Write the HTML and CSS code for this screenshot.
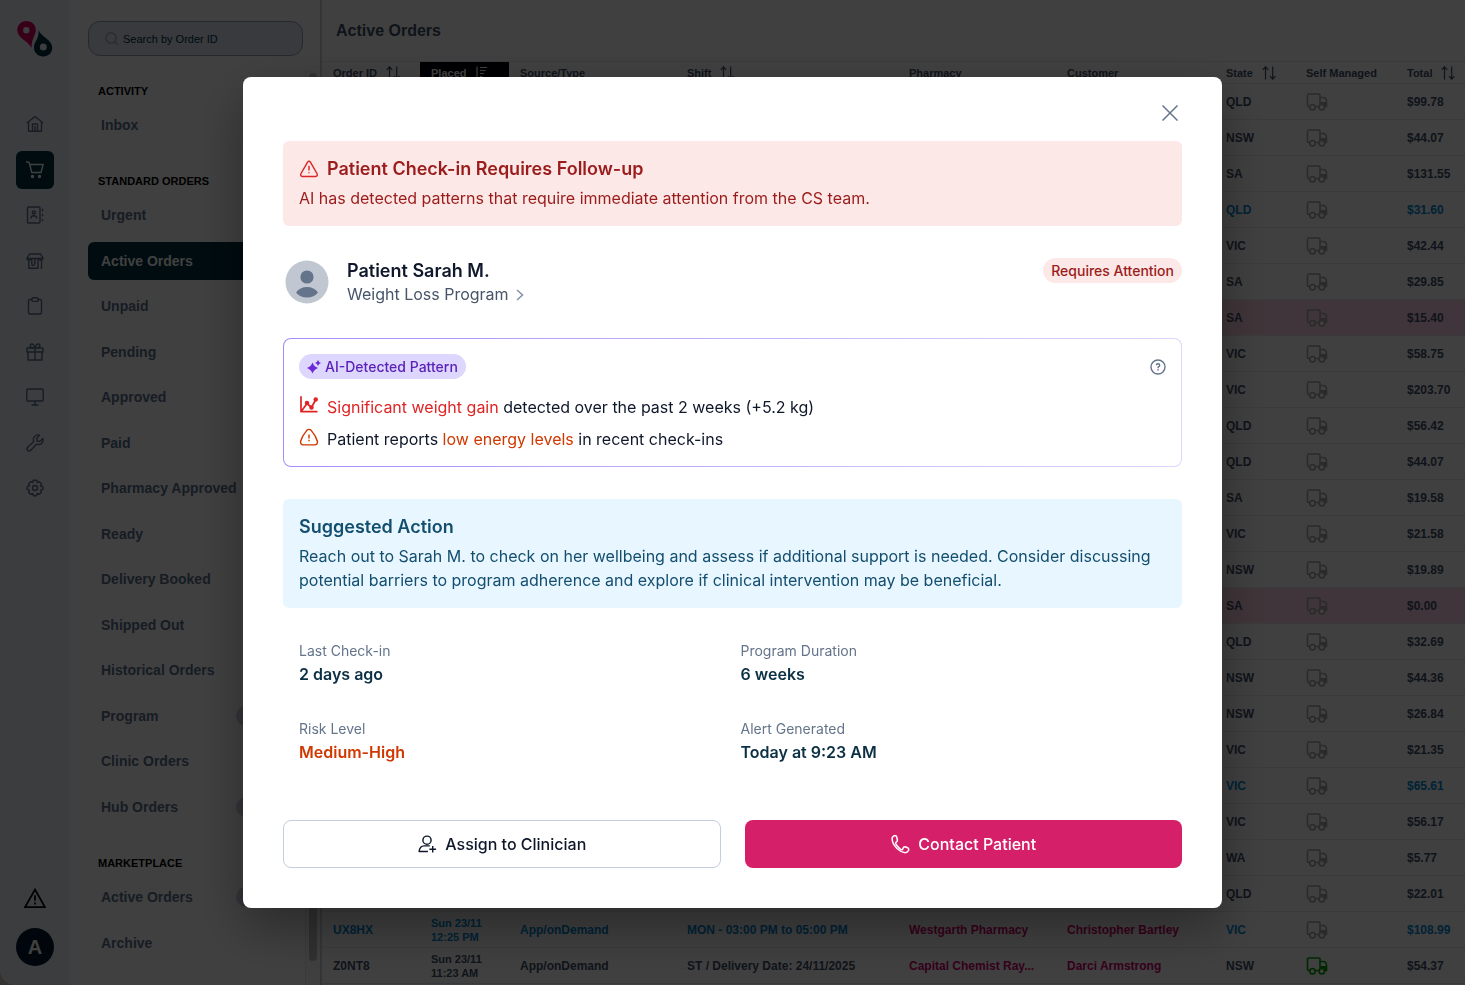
FILE: index.html
```html
<!DOCTYPE html>
<html lang="en">
<head>
<meta charset="utf-8">
<meta name="viewport" content="width=device-width, initial-scale=1">
<title>Active Orders</title>
<link rel="stylesheet" href="styles.css">
</head>
<body>
<svg class="sprite" aria-hidden="true">
  <symbol id="truck" viewBox="0 0 22 18"><path d="M14 13.500H9.500M3.500 13.500H2.500Q1.500 13.500 1.500 12.500V2Q1.500 1 2.500 1H13Q14 1 14 2V13.500M14 4.500H17Q20.500 4.500 20.500 8.500V13.500H19" fill="none" stroke="currentColor" stroke-width="1.600"/><path d="M14 9H21V14H19.500L17 12L14.500 14Z" fill="currentColor"/><circle cx="6.500" cy="14.200" r="2.700" fill="none" stroke="currentColor" stroke-width="1.600"/><circle cx="15.800" cy="14.200" r="2.700" class="truck-wheel" stroke="currentColor" stroke-width="1.600"/></symbol>
  <symbol id="sort" viewBox="0 0 14 14"><path d="M3.500 13.500V.8M.8 3.800L3.500 .8L6.200 3.800M10.700 .5V13.200M8 10.200L10.700 13.200L13.400 10.200" fill="none" stroke="currentColor" stroke-width="1.200"/></symbol>
</svg>
<div class="app">
  <nav class="rail" aria-label="Main">
    <svg class="logo" viewBox="0 0 36 36" aria-hidden="true"><path fill="#e0005f" fill-rule="evenodd" d="M9.500 0C15 0 19 4 18.800 9.500C18.600 14 14.500 18 14.500 27C11 20 .5 17 .3 9.500C.2 4 4.200 0 9.500 0ZM9.300 6A3.200 3.200 0 1 0 9.300 12.400A3.200 3.200 0 1 0 9.300 6Z"/><path fill="#00303f" fill-rule="evenodd" d="M21.500 9C24 16 35 18.500 35.300 26.500C35.400 31.500 31.300 35.500 26.200 35.500C21 35.500 16.800 31.500 17 26.300C17.200 20 22.500 18 21.500 9ZM26.300 22.500A3.500 3.500 0 1 0 26.300 29.500A3.500 3.500 0 1 0 26.300 22.500Z"/></svg>
    <ul class="rail-list">
      <li><a class="rail-link" href="#" aria-label="Home"><svg viewBox="0 0 18 18"><path d="M.8 8L9 1.500L17.200 8M2.500 7V16.300H15.500V7M6.500 16V9H11.500V16M9 11V16"/></svg></a></li>
      <li><a class="rail-link rail-link-active" href="#" aria-label="Orders"><svg viewBox="0 0 18 18"><path d="M0 1H2.200Q3 1 3.300 2L5.800 11.500H15L17.200 3.500H4"/><circle cx="6.500" cy="15.500" r="1" fill="currentColor"/><circle cx="13.500" cy="15.500" r="1" fill="currentColor"/></svg></a></li>
      <li><a class="rail-link" href="#" aria-label="Contacts"><svg viewBox="0 0 18 18"><rect x="1.500" y="1" width="12.500" height="16" rx="1"/><circle cx="7.800" cy="6.500" r="1.500"/><path d="M4.800 12.500Q5 9.800 7.800 9.800T10.800 12.500M16.500 2.800V5.200M16.500 7.800V10.200M16.500 12.800V15.200"/></svg></a></li>
      <li><a class="rail-link" href="#" aria-label="Store"><svg viewBox="0 0 18 18"><path d="M3.500 2H14.500L17.200 6.500H.8ZM1.200 7Q3 9.500 4.800 7M13.200 7Q15 9.500 16.800 7M2.800 8V16.300H12V7M5.800 7V12Q5.800 13.500 7.200 13.500T8.800 12V7M15.500 8V17"/></svg></a></li>
      <li><a class="rail-link" href="#" aria-label="Tasks"><svg viewBox="0 0 18 18"><path d="M6 2.500H4Q2.500 2.500 2.500 4V15.500Q2.500 17 4 17H14Q15.500 17 15.500 15.500V4Q15.500 2.500 14 2.500H12"/><rect x="6" y=".8" width="6" height="3.600" rx="1"/></svg></a></li>
      <li><a class="rail-link" href="#" aria-label="Offers"><svg viewBox="0 0 18 18"><path d="M1 5H17V9H1ZM2 9V17H16V9M9 5V17M9 5Q4 5 4 2.600Q4 1 5.800 1Q8 1 9 5Q10 1 12.200 1Q14 1 14 2.600Q14 5 9 5"/></svg></a></li>
      <li><a class="rail-link" href="#" aria-label="Display"><svg viewBox="0 0 18 18"><rect x=".8" y="1" width="16.400" height="12" rx="1"/><path d="M9 13V17M5.500 17H12.500"/></svg></a></li>
      <li><a class="rail-link" href="#" aria-label="Tools"><svg viewBox="0 0 18 18"><path d="M16.800 4.500L14 7.200L11 7L10.800 4L13.500 1.200Q10.500 .2 8.500 2.400Q6.800 4.500 7.700 7.500L1.600 13.300Q.3 15 1.500 16.400Q3 17.600 4.600 16.400L10.400 10.200Q13.500 11.200 15.600 9.500Q17.700 7.300 16.800 4.500Z"/></svg></a></li>
      <li><a class="rail-link" href="#" aria-label="Settings"><svg viewBox="0 0 18 18"><path d="M7.200 1.200L10.800 1.200L11.300 3.500L13.300 2.700L15.600 5.200L14.500 7L16.900 7.800V10.400L14.600 11.100L15.500 13.300L13.200 15.400L11.200 14.500L10.500 16.800H7.500L6.800 14.500L4.700 15.400L2.500 13.200L3.400 11.100L1.100 10.400V7.700L3.400 6.900L2.500 4.900L4.700 2.700L6.700 3.500Z"/><circle cx="9" cy="9" r="2.500"/></svg></a></li>
    </ul>
    <div class="rail-foot">
      <a class="rail-warn" href="#" aria-label="Alerts"><svg viewBox="0 0 20 18"><path d="M10 1.300L19 17.200H1ZM10 6.500V11.500M10 13.200V15"/></svg></a>
      <button class="rail-avatar" type="button">A</button>
    </div>
  </nav>

  <aside class="sidebar">
    <div class="search">
      <svg viewBox="0 0 15 15" aria-hidden="true"><circle cx="6.500" cy="6.500" r="5.500"/><path d="M10.500 10.500L14 14"/></svg>
      <input type="text" placeholder="Search by Order ID" aria-label="Search by Order ID">
    </div>
    <div class="side-body">
      <div class="side-menu">
        <h2 class="side-head">ACTIVITY</h2>
        <ul class="side-list">
          <li><a class="side-link" href="#">Inbox</a></li>
        </ul>
        <h2 class="side-head side-head-next">STANDARD ORDERS</h2>
        <ul class="side-list side-list-main">
          <li><a class="side-link" href="#">Urgent</a></li>
          <li><a class="side-link side-link-active" href="#">Active Orders</a></li>
          <li><a class="side-link" href="#">Unpaid</a></li>
          <li><a class="side-link" href="#">Pending</a></li>
          <li><a class="side-link" href="#">Approved</a></li>
          <li><a class="side-link" href="#">Paid</a></li>
          <li><a class="side-link" href="#">Pharmacy Approved</a></li>
          <li><a class="side-link" href="#">Ready</a></li>
          <li><a class="side-link" href="#">Delivery Booked</a></li>
          <li><a class="side-link" href="#">Shipped Out</a></li>
          <li><a class="side-link" href="#">Historical Orders</a></li>
          <li><a class="side-link" href="#">Program<span class="side-count"></span></a></li>
          <li><a class="side-link" href="#">Clinic Orders</a></li>
          <li><a class="side-link" href="#">Hub Orders<span class="side-count"></span></a></li>
        </ul>
        <h2 class="side-head side-head-next">MARKETPLACE</h2>
        <ul class="side-list">
          <li><a class="side-link" href="#">Active Orders<span class="side-count"></span></a></li>
          <li><a class="side-link" href="#">Archive</a></li>
        </ul>
      </div>
      <div class="scroll-track"><div class="scroll-thumb"></div></div>
    </div>
  </aside>

  <main class="content">
    <h1 class="page-title">Active Orders</h1>
    <table class="orders">
      <colgroup><col class="c-id"><col class="c-placed"><col class="c-source"><col class="c-shift"><col class="c-pharmacy"><col class="c-customer"><col class="c-state"><col class="c-self"><col class="c-total"></colgroup>
      <thead>
        <tr>
          <th scope="col"><span class="th">Order ID<svg><use href="#sort"/></svg></span></th>
          <th scope="col" class="sorted"><span class="th">Placed<svg viewBox="0 0 14 14"><path d="M2 .5V14M5 1.500H12M5 4.500H10.500M5 7.500H9M5 10.500H7.500" fill="none" stroke="currentColor" stroke-width="1.200"/></svg></span></th>
          <th scope="col">Source/Type</th>
          <th scope="col"><span class="th">Shift<svg><use href="#sort"/></svg></span></th>
          <th scope="col">Pharmacy</th>
          <th scope="col">Customer</th>
          <th scope="col"><span class="th">State<svg><use href="#sort"/></svg></span></th>
          <th scope="col">Self Managed</th>
          <th scope="col"><span class="th">Total<svg><use href="#sort"/></svg></span></th>
        </tr>
      </thead>
      <tbody>
        <tr><td colspan="6"></td><td>QLD</td><td><svg class="truck"><use href="#truck"/></svg></td><td>$99.78</td></tr>
        <tr><td colspan="6"></td><td>NSW</td><td><svg class="truck"><use href="#truck"/></svg></td><td>$44.07</td></tr>
        <tr><td colspan="6"></td><td>SA</td><td><svg class="truck"><use href="#truck"/></svg></td><td>$131.55</td></tr>
        <tr class="row-new"><td colspan="6"></td><td>QLD</td><td><svg class="truck"><use href="#truck"/></svg></td><td>$31.60</td></tr>
        <tr><td colspan="6"></td><td>VIC</td><td><svg class="truck"><use href="#truck"/></svg></td><td>$42.44</td></tr>
        <tr><td colspan="6"></td><td>SA</td><td><svg class="truck"><use href="#truck"/></svg></td><td>$29.85</td></tr>
        <tr class="row-flag"><td colspan="6"></td><td>SA</td><td><svg class="truck"><use href="#truck"/></svg></td><td>$15.40</td></tr>
        <tr><td colspan="6"></td><td>VIC</td><td><svg class="truck"><use href="#truck"/></svg></td><td>$58.75</td></tr>
        <tr><td colspan="6"></td><td>VIC</td><td><svg class="truck"><use href="#truck"/></svg></td><td>$203.70</td></tr>
        <tr><td colspan="6"></td><td>QLD</td><td><svg class="truck"><use href="#truck"/></svg></td><td>$56.42</td></tr>
        <tr><td colspan="6"></td><td>QLD</td><td><svg class="truck"><use href="#truck"/></svg></td><td>$44.07</td></tr>
        <tr><td colspan="6"></td><td>SA</td><td><svg class="truck"><use href="#truck"/></svg></td><td>$19.58</td></tr>
        <tr><td colspan="6"></td><td>VIC</td><td><svg class="truck"><use href="#truck"/></svg></td><td>$21.58</td></tr>
        <tr><td colspan="6"></td><td>NSW</td><td><svg class="truck"><use href="#truck"/></svg></td><td>$19.89</td></tr>
        <tr class="row-flag"><td colspan="6"></td><td>SA</td><td><svg class="truck"><use href="#truck"/></svg></td><td>$0.00</td></tr>
        <tr><td colspan="6"></td><td>QLD</td><td><svg class="truck"><use href="#truck"/></svg></td><td>$32.69</td></tr>
        <tr><td colspan="6"></td><td>NSW</td><td><svg class="truck"><use href="#truck"/></svg></td><td>$44.36</td></tr>
        <tr><td colspan="6"></td><td>NSW</td><td><svg class="truck"><use href="#truck"/></svg></td><td>$26.84</td></tr>
        <tr><td colspan="6"></td><td>VIC</td><td><svg class="truck"><use href="#truck"/></svg></td><td>$21.35</td></tr>
        <tr class="row-new"><td colspan="6"></td><td>VIC</td><td><svg class="truck"><use href="#truck"/></svg></td><td>$65.61</td></tr>
        <tr><td colspan="6"></td><td>VIC</td><td><svg class="truck"><use href="#truck"/></svg></td><td>$56.17</td></tr>
        <tr><td colspan="6"></td><td>WA</td><td><svg class="truck"><use href="#truck"/></svg></td><td>$5.77</td></tr>
        <tr><td colspan="6"></td><td>QLD</td><td><svg class="truck"><use href="#truck"/></svg></td><td>$22.01</td></tr>
        <tr class="row-new"><td>UX8HX</td><td class="when">Sun 23/11<br>12:25 PM</td><td>App/onDemand</td><td>MON - 03:00 PM to 05:00 PM</td><td class="person">Westgarth Pharmacy</td><td class="person">Christopher Bartley</td><td>VIC</td><td><svg class="truck"><use href="#truck"/></svg></td><td>$108.99</td></tr>
        <tr><td>Z0NT8</td><td class="when">Sun 23/11<br>11:23 AM</td><td>App/onDemand</td><td>ST / Delivery Date: 24/11/2025</td><td class="person">Capital Chemist Ray...</td><td class="person">Darci Armstrong</td><td>NSW</td><td><svg class="truck truck-on"><use href="#truck"/></svg></td><td>$54.37</td></tr>
      </tbody>
    </table>
  </main>
</div>

<div class="overlay">
  <section class="modal" role="dialog" aria-modal="true" aria-labelledby="alert-title">
    <button class="close" type="button" aria-label="Close"><svg viewBox="0 0 16 16"><path d="M.5 .5L15.500 15.500M15.500 .5L.5 15.500"/></svg></button>

    <div class="panel panel-alert">
      <h2 class="panel-title" id="alert-title"><svg class="icon" viewBox="-.5 -.5 21 21"><path d="M8.500 2.800Q10 .8 11.500 2.800L18.500 15Q19.400 17.600 17 17.800H3Q.6 17.600 1.500 15ZM10 6.500V11.500M10 13.300V14.500"/></svg>Patient Check-in Requires Follow-up</h2>
      <p>AI has detected patterns that require immediate attention from the CS team.</p>
    </div>

    <div class="patient">
      <svg class="avatar" viewBox="0 0 48 48" aria-hidden="true"><circle cx="24" cy="24" r="21.500" fill="#c0c7d1"/><circle cx="24" cy="19" r="6.600" fill="#64748b"/><path d="M13 34.500Q17 29 24 29T35 34.500Q31 39.500 24 39.500T13 34.500Z" fill="#64748b"/></svg>
      <div class="patient-text">
        <h3 class="patient-name">Patient Sarah M.</h3>
        <a class="patient-program" href="#">Weight Loss Program<svg viewBox="0 0 8 12"><path d="M1 1L6.500 6L1 11"/></svg></a>
      </div>
      <span class="badge badge-red">Requires Attention</span>
    </div>

    <div class="pattern">
      <div class="pattern-top">
        <span class="badge badge-violet"><svg viewBox="0 0 14 14" aria-hidden="true"><path d="M5.500 2.500Q6.800 6.500 11 8Q6.800 9.500 5.500 13.500Q4.200 9.500 0 8Q4.200 6.500 5.500 2.500ZM11 0Q11.700 2.300 14 3Q11.700 3.700 11 6Q10.300 3.700 8 3Q10.300 2.300 11 0Z"/></svg>AI-Detected Pattern</span>
        <button class="help" type="button" aria-label="Help"><svg viewBox="0 0 16 16"><circle cx="8" cy="8" r="7"/><path d="M6.300 6.300Q6.300 4.700 8 4.700T9.700 6.200Q9.700 7.200 8.700 7.700Q8 8.100 8 9.200"/><path class="help-dot" d="M8 10.300V11.600"/></svg></button>
      </div>
      <ul class="findings">
        <li><svg class="icon icon-red" viewBox="0 0 20 20"><path stroke-width="1.700" d="M2 1.200V16.700H18.500M2.500 16L8 8.500L12.500 12.500L16.500 5"/><circle cx="8" cy="8" r="1.500" fill="currentColor"/><circle cx="12.500" cy="12.500" r="1.500" fill="currentColor"/><circle cx="16.700" cy="4.500" r="1.500" fill="currentColor"/></svg><span><span class="text-red">Significant weight gain</span> detected over the past 2 weeks (+5.2 kg)</span></li>
        <li><svg class="icon icon-orange" viewBox="-.5 -1.500 21 21"><path d="M7.500 2.300Q10 -.3 12.500 2.300Q17 7.500 18.800 13.500Q19.300 17 16 17.300H4Q.7 17 1.200 13.500Q3 7.500 7.500 2.300ZM10 6.500V10.500M10 12V13.500"/></svg><span>Patient reports <span class="text-orange">low energy levels</span> in recent check-ins</span></li>
      </ul>
    </div>

    <div class="panel panel-action">
      <h2 class="panel-title">Suggested Action</h2>
      <p>Reach out to Sarah M. to check on her wellbeing and assess if additional support is needed. Consider discussing potential barriers to program adherence and explore if clinical intervention may be beneficial.</p>
    </div>

    <dl class="stats">
      <div><dt>Last Check-in</dt><dd>2 days ago</dd></div>
      <div><dt>Program Duration</dt><dd>6 weeks</dd></div>
      <div><dt>Risk Level</dt><dd class="text-orange">Medium-High</dd></div>
      <div><dt>Alert Generated</dt><dd>Today at 9:23 AM</dd></div>
    </dl>

    <div class="actions">
      <button class="btn btn-plain" type="button"><svg class="icon" viewBox="-1 -.5 21 21"><circle cx="9.500" cy="6" r="4.300"/><path d="M12.500 12H6.500Q2 12 1.200 17.800H10.500M15.500 12V19M12 15.500H19"/></svg>Assign to Clinician</button>
      <button class="btn btn-primary" type="button"><svg class="icon" viewBox="0 0 20 20"><path d="M2.200 3.600Q3.300 1.600 5 1.500Q6.300 1.500 6.700 3L7.400 6Q7.500 7.300 6 8.300Q5.300 9.300 6.500 11Q8.500 13.800 11 15.500Q12.500 16.500 12.900 14.500Q13.500 12.600 15.200 12.700L17.500 13.700Q19.300 14.700 18.500 16.500Q17.500 18.700 15 18.700Q11 18.300 7 14.500Q1.500 9 2.200 3.600Z"/></svg>Contact Patient</button>
    </div>
  </section>
</div>
</body>
</html>
```
FILE: styles.css
```css
* { box-sizing: border-box; }
html, body { height: 100%; }
body { margin: 0; background: #d8c8c8; font-family: "Liberation Sans", Arial, sans-serif; color: #3f5069; overflow: hidden; }
h1, h2, h3, p, ul, dl, dd { margin: 0; padding: 0; }
ul { list-style: none; }
a { color: inherit; text-decoration: none; }
button { font: inherit; color: inherit; background: none; border: 0; padding: 0; cursor: pointer; }
svg { display: block; flex: none; }
.sprite { position: absolute; width: 0; height: 0; }

.app { display: flex; height: 100vh; overflow: hidden; background: #fff; border-bottom-left-radius: 16px; }

/* Icon rail */
.rail { flex: none; width: 70px; display: flex; flex-direction: column; align-items: center; padding: 21px 0 19px; background: #f0f4f8; color: #5b7290; }
.logo { width: 36px; height: 36px; }
.rail-list { min-height: 402px; margin-top: 48px; display: flex; flex-direction: column; justify-content: space-between; }
.rail-link { width: 38px; height: 38px; display: flex; align-items: center; justify-content: center; border-radius: 6px; }
.rail-link svg { width: 18px; height: 18px; fill: none; stroke: currentColor; stroke-width: 1.4; stroke-linejoin: round; }
.rail-link-active { background: #00303f; color: #fff; }
.rail-foot { margin-top: auto; display: flex; flex-direction: column; align-items: center; gap: 20px; }
.rail-warn { color: #000; }
.rail-warn svg { width: 22px; height: 20px; fill: none; stroke: currentColor; stroke-width: 1.6; }
.rail-avatar { width: 38px; height: 38px; border-radius: 50%; background: #001a2c; color: #fff; font-size: 20px; font-weight: 700; }

/* Sidebar */
.sidebar { flex: none; width: 252px; display: flex; flex-direction: column; border-right: 2px solid #cbd5e1; }
.search { margin: 21px 17px 0 18px; height: 35px; display: flex; align-items: center; gap: 4px; padding: 0 16px; border: 1px solid #94a3b8; border-radius: 12px; background: #e1e6f5; }
.search svg { width: 14px; height: 14px; fill: none; stroke: #94a3b8; stroke-width: 1.2; }
.search input { flex: 1; min-width: 0; border: 0; padding: 0; background: none; font: 11px "Liberation Sans", Arial, sans-serif; color: #00303f; }
.search input::placeholder { color: #00303f; opacity: 1; }
.side-body { flex: 1; min-height: 0; margin-top: 14px; display: flex; }
.side-menu { flex: 1; min-width: 0; padding: 14px 3px 0 18px; }
.side-head { padding-left: 10px; font-size: 11px; line-height: 14px; font-weight: 700; color: #000; }
.side-head-next { margin-top: 30px; }
.side-list { display: flex; flex-direction: column; gap: 8px; margin-top: 8px; }
.side-list-main { gap: 0; min-height: 630px; justify-content: space-between; }
.side-link { height: 38px; display: flex; align-items: center; justify-content: space-between; padding: 0 4px 0 13px; border-radius: 6px; font-size: 14px; font-weight: 700; color: #5b7290; }
.side-link-active { background: #00303f; color: #fff; }
.side-count { width: 62px; height: 20px; border-radius: 10px; background: #cbd0e4; }
.scroll-track { flex: none; width: 15px; padding: 3px 3px 24px; border-left: 1px solid #e8e8e8; background: #fafafa; }
.scroll-thumb { width: 8px; height: 100%; border-radius: 4px; background: #c1c1c1; }

/* Orders table */
.content { flex: 1; min-width: 0; }
.page-title { height: 61px; padding: 0 14px; display: flex; align-items: center; font-size: 16px; font-weight: 700; color: #3f5069; }
.orders { width: 100%; table-layout: fixed; border-collapse: collapse; font-size: 12px; font-weight: 700; }
.c-id { width: 98px; }
.c-placed { width: 89px; }
.c-source { width: 167px; }
.c-shift { width: 222px; }
.c-pharmacy { width: 158px; }
.c-customer { width: 159px; }
.c-state { width: 80px; }
.c-self { width: 101px; }
.c-total { width: 69px; }
.orders th { height: 22px; padding: 0 0 0 11px; text-align: left; font-size: 11px; border-top: 1px solid #e2e8f0; border-bottom: 1px solid #e2e8f0; white-space: nowrap; }
.orders .sorted { background: #00000a; color: #fff; }
.th { display: flex; align-items: center; gap: 9px; }
.th svg { width: 14px; height: 14px; }
.orders td { height: 36px; padding: 0 0 0 11px; border-bottom: 1px solid #e2e8f0; white-space: nowrap; }
.orders .when { font-size: 11px; line-height: 14px; }
.orders .person { color: #d6006c; }
.orders .row-new { color: #0088d6; }
.orders .row-flag { background: #ffd4e6; }
.truck { width: 22px; height: 18px; color: #a8a8a8; }
.truck-wheel { fill: #fff; }
.truck-on { color: #00a000; }

/* Dialog */
.overlay { position: fixed; inset: 0; display: flex; align-items: center; justify-content: center; background: rgba(0, 0, 0, 0.75); font-family: Inter, sans-serif; color: #0f172a; }
.modal { width: 979px; max-width: 100%; padding: 0 40px 40px; border-radius: 8px; background: #fff; box-shadow: 0 20px 50px rgba(0, 0, 0, 0.35); font-size: 16px; line-height: 24px; }
.close { display: flex; align-items: center; justify-content: center; width: 24px; height: 24px; margin: 24px 0 16px auto; }
.close svg { width: 16px; height: 16px; fill: none; stroke: #64748b; stroke-width: 1.5; }
.icon { width: 20px; height: 20px; fill: none; stroke: currentColor; stroke-width: 1.5; stroke-linejoin: round; }

.panel { padding: 16px; border-radius: 6px; }
.panel-title { display: flex; align-items: center; gap: 8px; margin-bottom: 5px; font-size: 18px; line-height: 24px; font-weight: 600; }
.panel-alert { background: #fce8e6; color: #9b1c1c; }
.panel-alert .icon { color: #dc2626; }
.panel-action { background: #e8f6ff; color: #134e6f; margin-top: 32px; }

.patient { display: flex; align-items: flex-start; gap: 16px; margin-top: 32px; }
.avatar { width: 48px; height: 48px; }
.patient-text { flex: 1; display: flex; flex-direction: column; align-items: flex-start; }
.patient-name { font-size: 18px; line-height: 25px; font-weight: 600; }
.patient-program { display: flex; align-items: center; gap: 7px; line-height: 23px; color: #475569; }
.patient-program svg { width: 8px; height: 12px; fill: none; stroke: #8191a8; stroke-width: 1.5; }

.badge { display: inline-flex; align-items: center; gap: 4px; height: 25px; padding: 0 8px; border-radius: 13px; font-size: 14px; font-weight: 500; }
.badge svg { width: 14px; height: 14px; fill: #6d28d9; }
.badge-red { background: #fce8e6; color: #9b1c1c; }
.badge-violet { background: #ddd6fe; color: #5b21b6; }

.pattern { margin-top: 32px; padding: 15px; border: 1px solid transparent; border-radius: 8px; background: linear-gradient(#fff, #fff) padding-box, linear-gradient(90deg, #a78bfa, #ddd6fe) border-box; }
.pattern-top { display: flex; align-items: center; justify-content: space-between; }
.help svg { width: 16px; height: 16px; fill: none; stroke: #64748b; stroke-width: 1.4; }
.help .help-dot { stroke: #7c3aed; }
.findings { display: flex; flex-direction: column; gap: 8px; margin-top: 16px; }
.findings li { display: flex; gap: 8px; }
.icon-red, .text-red { color: #e02424; }
.icon-orange, .text-orange { color: #d03801; }

.stats { display: grid; grid-template-columns: 1fr 1fr; gap: 32px 16px; margin-top: 32px; padding: 0 16px; }
.stats dt { font-size: 14px; line-height: 22px; color: #64748b; }
.stats dd { font-weight: 600; color: #0b3044; }
.stats .text-orange { color: #d03801; }

.actions { display: grid; grid-template-columns: 1fr 1fr; gap: 24px; margin-top: 56px; }
.btn { height: 48px; display: flex; align-items: center; justify-content: center; gap: 8px; border-radius: 8px; font-weight: 500; }
.btn-plain { border: 1px solid #c3cfe0; }
.btn-primary { background: #d61f69; color: #fff; }
```
